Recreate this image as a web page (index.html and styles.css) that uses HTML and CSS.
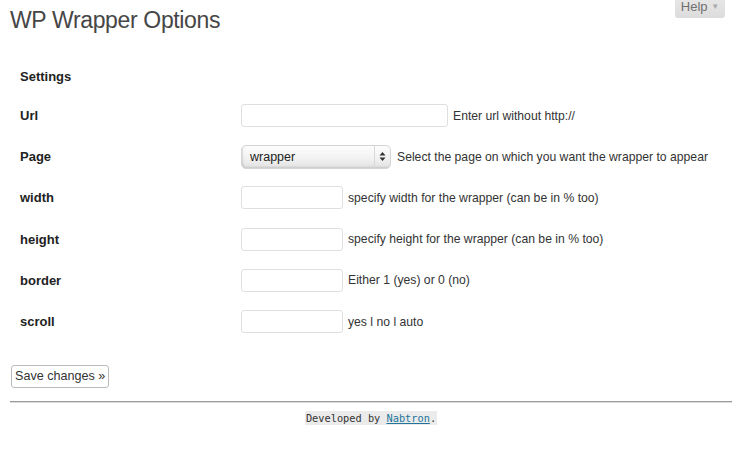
FILE: index.html
```html
<!DOCTYPE html>
<html>
<head>
<meta charset="utf-8">
<link rel="stylesheet" href="styles.css">
</head>
<body>
<div class="help-bar"><span class="help-tab">Help <span class="arrow">▼</span></span></div>
<div class="wrap">
  <h2 class="title">WP Wrapper Options</h2>
  <h3 class="section">Settings</h3>
  <div class="form">
    <div class="row">
      <div class="label">Url</div>
      <div class="field"><span class="input wide"></span><span class="desc">Enter url without http://</span></div>
    </div>
    <div class="row">
      <div class="label">Page</div>
      <div class="field"><span class="select"><span class="sel-text">wrapper</span><span class="sel-arrows"><svg width="7" height="11" viewBox="0 0 7 11"><path d="M3.5 1 L6.5 4.5 L0.5 4.5 Z M3.5 10 L6.5 6.5 L0.5 6.5 Z" fill="#333"/></svg></span></span><span class="desc">Select the page on which you want the wrapper to appear</span></div>
    </div>
    <div class="row">
      <div class="label">width</div>
      <div class="field"><span class="input"></span><span class="desc">specify width for the wrapper (can be in % too)</span></div>
    </div>
    <div class="row">
      <div class="label">height</div>
      <div class="field"><span class="input"></span><span class="desc">specify height for the wrapper (can be in % too)</span></div>
    </div>
    <div class="row">
      <div class="label">border</div>
      <div class="field"><span class="input"></span><span class="desc">Either 1 (yes) or 0 (no)</span></div>
    </div>
    <div class="row">
      <div class="label">scroll</div>
      <div class="field"><span class="input"></span><span class="desc">yes l no l auto</span></div>
    </div>
  </div>
  <div class="actions"><button class="save">Save changes »</button></div>
  <hr class="rule">
  <div class="footer"><code class="dev">Developed by <a href="#">Nabtron</a>.</code></div>
</div>
</body>
</html>
```
FILE: styles.css
```css
html, body {
  margin: 0;
  padding: 0;
  background: #fff;
}
body {
  font-family: "Liberation Sans", Arial, sans-serif;
  font-size: 13px;
  color: #333;
  width: 742px;
  height: 456px;
  overflow: hidden;
  position: relative;
}
.help-bar {
  position: absolute;
  top: 0;
  right: 17px;
}
.help-tab {
  display: block;
  width: 50px;
  height: 18px;
  box-sizing: border-box;
  text-align: center;
  background: linear-gradient(#e6e6e6, #dcdcdc);
  border-radius: 0 0 3px 3px;
  color: #707070;
  font-size: 13px;
  line-height: 14px;
}
.help-tab .arrow {
  font-size: 8px;
  color: #aaa;
  vertical-align: 2px;
}
.wrap {
  padding: 0 10px;
}
.title {
  margin: 0;
  padding-top: 6px;
  font-size: 23px;
  line-height: 29px;
  font-weight: normal;
  color: #464646;
  letter-spacing: -0.35px;
}
.section {
  margin: 0;
  padding: 34px 0 0 10px;
  font-size: 13px;
  line-height: 16px;
  font-weight: bold;
  color: #222;
  height: 19px;
}
.form {
  display: flex;
  flex-direction: column;
  margin-top: 7px;
}
.row {
  display: grid;
  grid-template-columns: 231px 1fr;
  align-items: center;
  height: 41.2px;
}
.label {
  padding-left: 10px;
  font-weight: bold;
  color: #222;
}
.field {
  display: flex;
  align-items: center;
  font-size: 12.2px;
}
.input {
  display: block;
  width: 102px;
  height: 23px;
  box-sizing: border-box;
  border: 1px solid #dfdfdf;
  border-radius: 3px;
  background: #fff;
  margin-right: 5px;
}
.input.wide {
  width: 207px;
}
.select {
  display: flex;
  align-items: center;
  width: 150px;
  height: 24px;
  box-sizing: border-box;
  border: 1px solid #d4d4d4;
  border-radius: 5px;
  background: linear-gradient(#fdfdfd, #f2f2f2 55%, #e2e2e2);
  margin-right: 6px;
  box-shadow: inset 1px -1px 2px rgba(0,0,0,0.12);
}
.sel-text {
  flex: 1;
  padding-left: 8px;
  color: #222;
  font-size: 12.5px;
}
.sel-arrows {
  display: flex;
  align-items: center;
  justify-content: center;
  width: 15px;
  height: 22px;
  border-left: 1px solid #d8d8d8;
}
.desc {
  color: #333;
}
.actions {
  padding-top: 23px;
  padding-left: 1px;
}
.save {
  font-family: "Liberation Sans", Arial, sans-serif;
  font-size: 12.6px;
  color: #333;
  background: #fff;
  border: 1px solid #bbb;
  border-radius: 3px;
  height: 23px;
  padding: 0 3px;
  line-height: 19px;
  white-space: nowrap;
}
.rule {
  margin: 13px 0 0 0;
  border: 0;
  height: 2px;
  background: linear-gradient(#999 50%, #ddd 50%);
}
.footer {
  text-align: center;
  padding-top: 7px;
}
.dev {
  font-family: "DejaVu Sans Mono", monospace;
  font-size: 10.3px;
  background: #ebebeb;
  color: #333;
  padding: 1px 1px;
}
.dev a {
  color: #21759b;
}
```
